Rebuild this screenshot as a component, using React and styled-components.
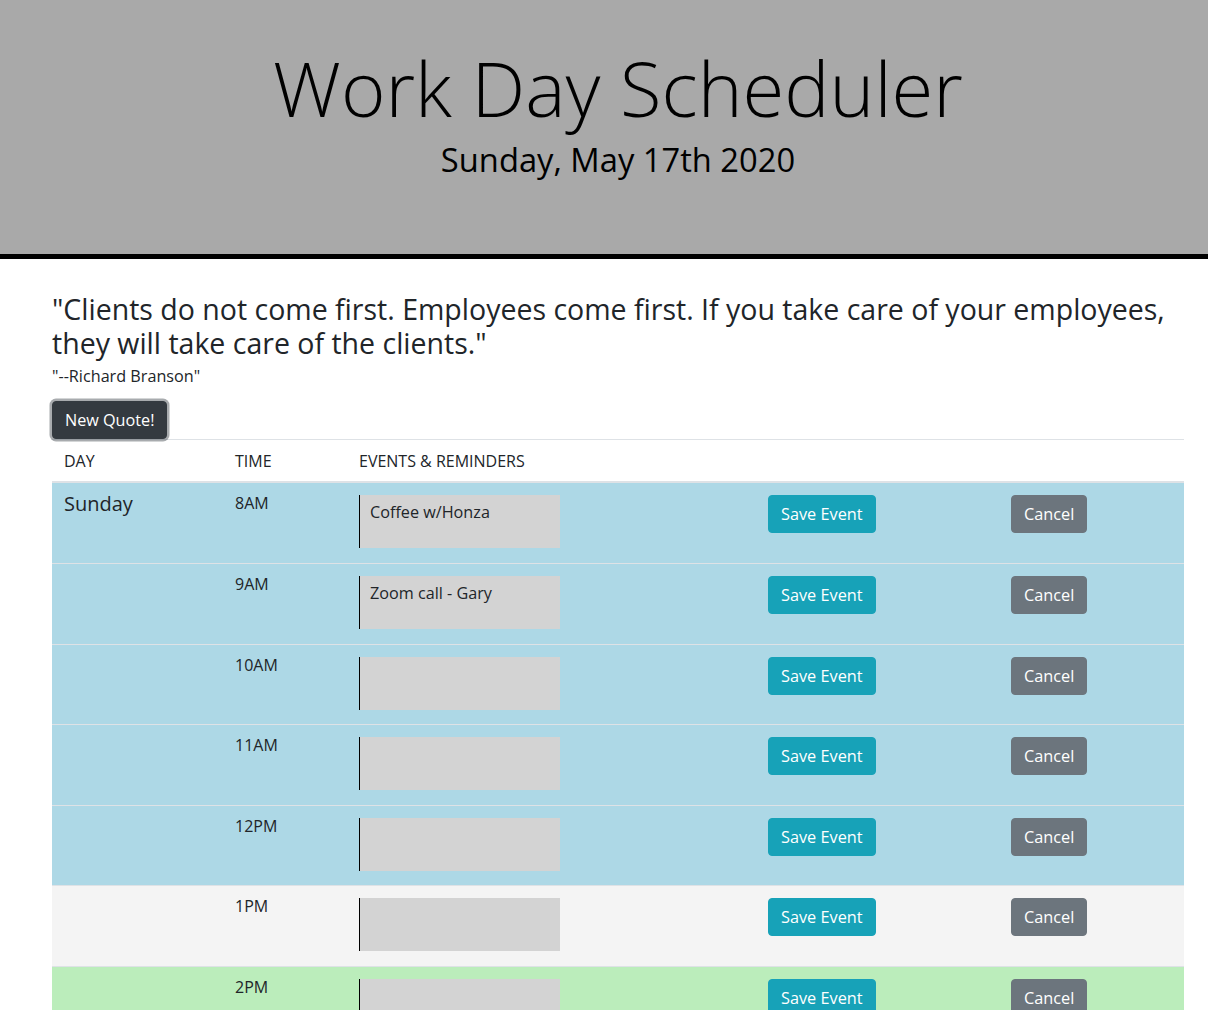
import React from 'react'
import { styled, createGlobalStyle } from 'styled-components'

const GlobalStyle = createGlobalStyle`
    body {
        margin: 0;
        font-family: "Open Sans", "Noto Sans", sans-serif;
        color: #212529;
        background: #fff;
    }
`

const Page = styled.div`
    height: 1010px;
    overflow: hidden;
`

const Jumbotron = styled.header`
    height: 259px;
    box-sizing: border-box;
    padding-top: 44px;
    background-color: #a9a9a9;
    border-bottom: 5px solid #000;
    color: #000;
`

const HeaderInner = styled.div`
    width: 1132px;
    margin-left: 52px;
    text-align: center;
`

const Title = styled.h1`
    margin: 0;
    font-size: 76px;
    font-weight: 350;
    line-height: 88px;
`

const Today = styled.p`
    margin: 4px 0 0;
    font-size: 32.7px;
    line-height: 48px;
`

const Container = styled.main`
    width: 1132px;
    margin-left: 52px;
    padding-top: 33px;
`

const Quote = styled.h3`
    margin: 0 0 4px;
    font-size: 28.5px;
    font-weight: 400;
    line-height: 34px;
`

const Author = styled.p`
    margin: 0 0 13px;
    font-size: 16.2px;
    line-height: 24px;
`

const QuoteButton = styled.button`
    font-family: inherit;
    font-size: 16.2px;
    line-height: 24px;
    padding: 6px 12px;
    border: 1px solid #343a40;
    border-radius: 4px;
    color: #fff;
    background-color: #343a40;
    box-shadow: 0 0 0 2.5px rgba(82, 88, 93, 0.5);
    cursor: pointer;
`

const Table = styled.div`
    display: grid;
    grid-template-columns: 171px 124px 409px 243px 185px;
    border-top: 1px solid #dee2e6;
`

const HeadCell = styled.div`
    padding: 9px 12px 8px;
    font-size: 16px;
    line-height: 24px;
    text-transform: uppercase;
    border-bottom: 2px solid #dee2e6;
`

const Row = styled.div`
    display: contents;
    & > div {
        background-color: ${props => props.$bg};
        border-top: ${props => props.$first ? 'none' : '1px solid #dee2e6'};
        height: ${props => props.$first ? '80px' : '80.5px'};
    }
`

const Cell = styled.div`
    box-sizing: border-box;
    padding: 8px 12px;
    font-size: 16px;
    line-height: 24px;
`

const DayName = styled.span`
    display: block;
    font-size: 20px;
    line-height: 24px;
    padding-top: 1px;
`

const EventBox = styled.textarea`
    display: block;
    box-sizing: border-box;
    width: 201px;
    height: 53px;
    margin-top: 4px;
    padding: 5px 10px;
    border: none;
    border-left: 1px solid #000;
    border-radius: 0;
    background-color: #d3d3d3;
    font-family: inherit;
    font-size: 16.2px;
    line-height: 24px;
    color: #212529;
    resize: none;
    outline: none;
`

const ActionButton = styled.button`
    margin-top: 4px;
    font-family: inherit;
    font-size: 16.3px;
    line-height: 24px;
    padding: 6px 12px;
    border: 1px solid ${props => props.$color};
    border-radius: 4px;
    color: #fff;
    background-color: ${props => props.$color};
    cursor: pointer;
`

const hours = [
    { label: '8AM', text: 'Coffee w/Honza', state: 'past' },
    { label: '9AM', text: 'Zoom call - Gary', state: 'past' },
    { label: '10AM', text: '', state: 'past' },
    { label: '11AM', text: '', state: 'past' },
    { label: '12PM', text: '', state: 'past' },
    { label: '1PM', text: '', state: 'present' },
    { label: '2PM', text: '', state: 'future' },
    { label: '3PM', text: '', state: 'future' },
]

const colors = {
    past: '#add8e6',
    present: '#f4f4f4',
    future: '#bbedbb',
}

const App = () => {
    return (
        <Page>
            <GlobalStyle />
            <Jumbotron>
                <HeaderInner>
                    <Title>Work Day Scheduler</Title>
                    <Today>Sunday, May 17th 2020</Today>
                </HeaderInner>
            </Jumbotron>
            <Container>
                <Quote>"Clients do not come first. Employees come first. If you take care of your employees, they will take care of the clients."</Quote>
                <Author>"--Richard Branson"</Author>
                <QuoteButton>New Quote!</QuoteButton>
                <Table>
                    <HeadCell>Day</HeadCell>
                    <HeadCell>Time</HeadCell>
                    <HeadCell>Events &amp; Reminders</HeadCell>
                    <HeadCell />
                    <HeadCell />
                    {hours.map((h, i) => (
                        <Row key={h.label} $bg={colors[h.state]} $first={i === 0}>
                            <Cell>{i === 0 && <DayName>Sunday</DayName>}</Cell>
                            <Cell>{h.label}</Cell>
                            <Cell><EventBox defaultValue={h.text} /></Cell>
                            <Cell><ActionButton $color="#17a2b8">Save Event</ActionButton></Cell>
                            <Cell><ActionButton $color="#6c757d">Cancel</ActionButton></Cell>
                        </Row>
                    ))}
                </Table>
            </Container>
        </Page>
    )
}

export default App
